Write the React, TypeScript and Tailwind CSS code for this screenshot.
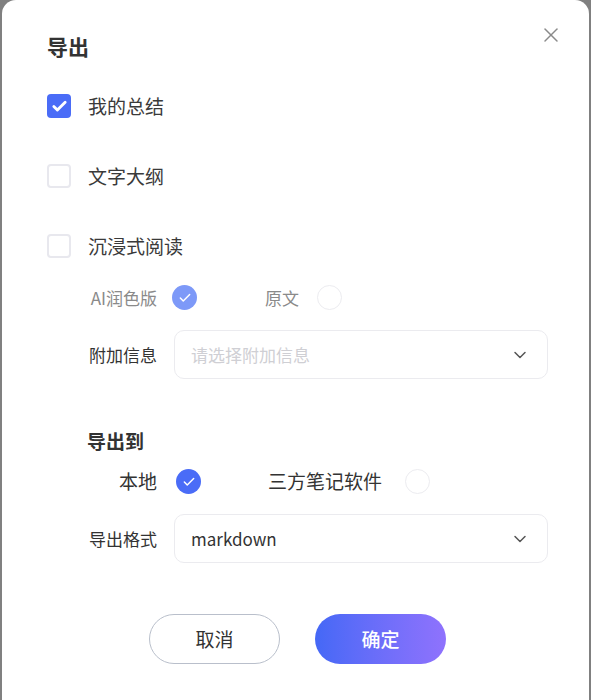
import { Check, ChevronDown, X } from "lucide-react";

const font = { fontFamily: '"Noto Sans CJK SC", "Noto Sans", sans-serif' };

function Checkbox({ checked, label }: { checked?: boolean; label: string }) {
  return (
    <div className="flex h-6 items-center">
      {checked ? (
        <span className="flex h-6 w-6 items-center justify-center rounded-[4px] bg-[#4a6cf7]">
          <Check className="h-[17px] w-[17px] text-white" strokeWidth={4} />
        </span>
      ) : (
        <span className="block h-6 w-6 rounded-[4px] border-2 border-[#e8e8ee] bg-white" />
      )}
      <span className="ml-[17px] text-[19px] text-[#3a3a3a]">{label}</span>
    </div>
  );
}

function Radio({ checked, light }: { checked?: boolean; light?: boolean }) {
  if (!checked) {
    return <span className="block h-[25px] w-[25px] rounded-full border border-[#ececf0] bg-white" />;
  }
  return (
    <span
      className={`flex h-[25px] w-[25px] items-center justify-center rounded-full ${
        light ? "bg-[#7d99f8]" : "bg-[#4a6cf7]"
      }`}
    >
      <Check className="h-[14px] w-[14px] text-white" strokeWidth={2.5} />
    </span>
  );
}

function Select({ value, placeholder }: { value?: string; placeholder?: string }) {
  return (
    <div className="flex h-[49px] w-[374px] items-center justify-between rounded-[10px] border border-[#ebebef] bg-white pl-4 pr-[17px]">
      {value ? (
        <span className="text-[17px] text-[#333]">{value}</span>
      ) : (
        <span className="text-[17px] text-[#cfcfd4]">{placeholder}</span>
      )}
      <ChevronDown className="h-5 w-5 text-[#555]" strokeWidth={1.8} />
    </div>
  );
}

export default function App() {
  return (
    <div className="h-[700px] w-full overflow-hidden bg-[#808080] px-[2px]" style={font}>
      <div className="relative h-[720px] rounded-t-[14px] bg-white pl-[45px] pt-[31px]">
        <button type="button" className="absolute right-[26px] top-[23px] text-[#8a8a8a]">
          <X className="h-6 w-6" strokeWidth={1.5} />
        </button>
        <h2 className="text-[21px] font-semibold leading-[30px] text-[#333]">导出</h2>

        <div className="mt-[33px] flex flex-col gap-[46px]">
          <Checkbox checked label="我的总结" />
          <Checkbox label="文字大纲" />
          <Checkbox label="沉浸式阅读" />
        </div>

        <div className="ml-[40px] mt-[27px]">
          <div className="flex h-[25px] items-center">
            <span className="w-[70px] text-right text-[17px] text-[#8a8a8a]">AI润色版</span>
            <span className="ml-[15px] flex">
              <Radio checked light />
            </span>
            <span className="ml-[68px] text-[17px] text-[#8a8a8a]">原文</span>
            <span className="ml-[18px] flex">
              <Radio />
            </span>
          </div>

          <div className="mt-[20px] flex items-center">
            <span className="w-[70px] text-right text-[17px] text-[#333]">附加信息</span>
            <span className="ml-[17px] flex">
              <Select placeholder="请选择附加信息" />
            </span>
          </div>

          <div className="mt-[48px] text-[19px] font-semibold leading-[28px] text-[#333]">导出到</div>

          <div className="mt-[14px] flex h-[25px] items-center">
            <span className="w-[70px] text-right text-[19px] text-[#333]">本地</span>
            <span className="ml-[19px] flex">
              <Radio checked />
            </span>
            <span className="ml-[67px] text-[19px] text-[#333]">三方笔记软件</span>
            <span className="ml-[23px] flex">
              <Radio />
            </span>
          </div>

          <div className="mt-[20px] flex items-center">
            <span className="w-[70px] text-right text-[17px] text-[#333]">导出格式</span>
            <span className="ml-[17px] flex">
              <Select value="markdown" />
            </span>
          </div>
        </div>

        <div className="mt-[51px] flex justify-center gap-[35px] pr-[41px]">
          <button
            type="button"
            className="h-[50px] w-[131px] rounded-full border border-[#b9bfcb] bg-white text-[19px] text-[#333]"
          >
            取消
          </button>
          <button
            type="button"
            className="h-[50px] w-[131px] rounded-full bg-gradient-to-r from-[#4468f6] to-[#8f72fd] text-[19px] font-medium text-white"
          >
            确定
          </button>
        </div>
      </div>
    </div>
  );
}
